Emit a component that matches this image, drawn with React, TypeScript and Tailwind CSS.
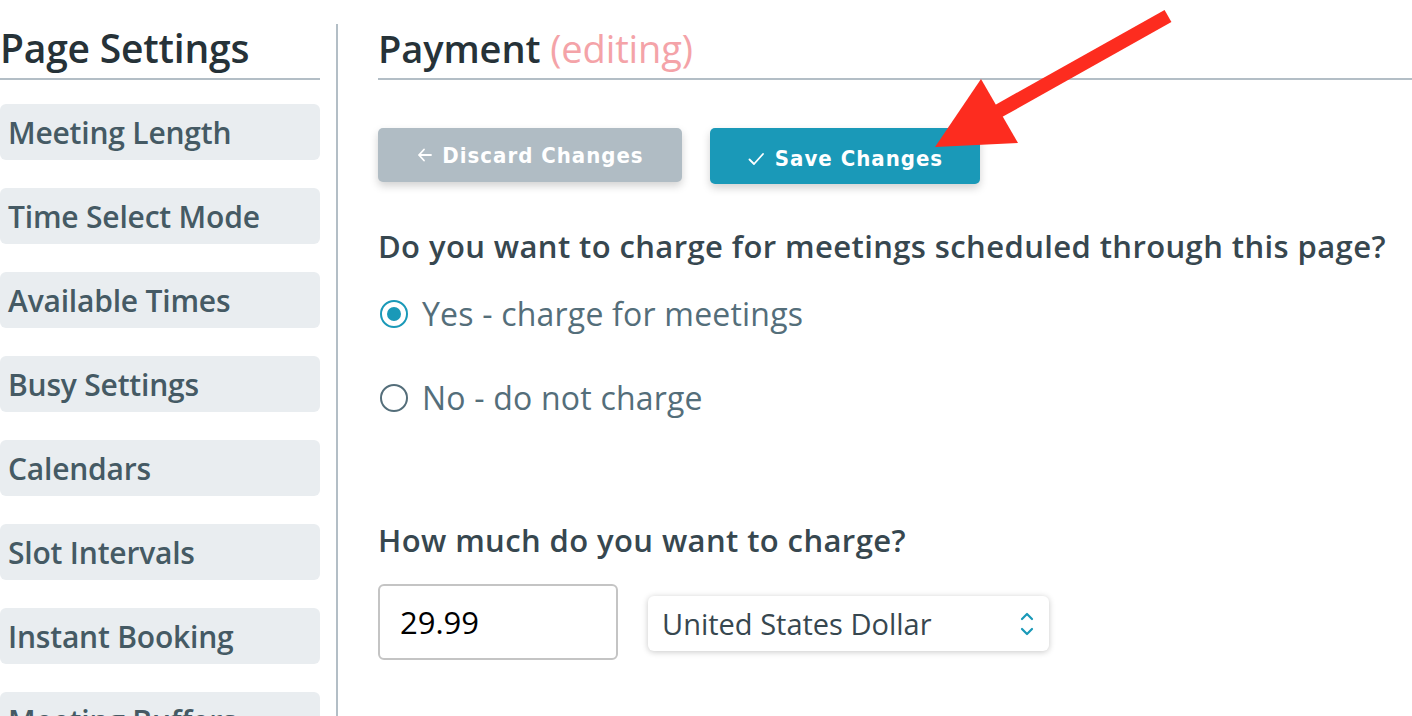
import React from "react";

const items = [
  "Meeting Length",
  "Time Select Mode",
  "Available Times",
  "Busy Settings",
  "Calendars",
  "Slot Intervals",
  "Instant Booking",
  "Meeting Buffers",
];

export default function App() {
  return (
    <div
      className="relative w-[1412px] h-[716px] overflow-hidden bg-white flex"
      style={{ fontFamily: '"Open Sans", "Noto Sans", sans-serif' }}
    >
      {/* Sidebar */}
      <div className="w-[320px] shrink-0 flex flex-col">
        <div className="h-[80px] shrink-0 border-b-2 border-[#b3bec6] flex items-end pb-[6px]">
          <h2 className="text-[39px] leading-[48px] font-semibold text-[#263238] tracking-[-0.2px]">
            Page Settings
          </h2>
        </div>
        <div className="flex flex-col gap-[28px] mt-[24px] shrink-0">
          {items.map((t) => (
            <div
              key={t}
              className="h-[56px] shrink-0 rounded-[6px] bg-[#e9edf0] flex items-center pl-[8px] text-[30px] font-semibold text-[#455a64] tracking-[-0.2px]"
            >
              {t}
            </div>
          ))}
        </div>
      </div>

      {/* Divider */}
      <div className="ml-[16px] mt-[24px] w-[2px] bg-[#b3bec6] shrink-0" />

      {/* Main */}
      <div className="ml-[40px] flex-1 flex flex-col">
        <div className="h-[80px] shrink-0 border-b-2 border-[#b3bec6] flex items-end pb-[6px]">
          <h2 className="text-[38px] leading-[48px] font-semibold text-[#263238] tracking-[-0.1px]">
            Payment{" "}
            <span className="font-normal text-[#f4a3a8]">(editing)</span>
          </h2>
        </div>

        <div className="flex items-start gap-[28px] mt-[48px] shrink-0">
          <button
            className="w-[304px] h-[54px] rounded-[5px] bg-[#b0bcc4] text-white text-[22px] font-bold tracking-[1px] flex items-center justify-center gap-[8px] shadow-[0_4px_8px_rgba(0,0,0,0.18)]"
            style={{ fontFamily: '"Liberation Sans Narrow", "DejaVu Sans Condensed", Roboto, sans-serif' }}
          >
            <svg width="18" height="18" viewBox="0 0 18 18" fill="none" stroke="white" strokeWidth="1.8" strokeLinecap="round" strokeLinejoin="round">
              <path d="M15 9H3M8 3.5L3 9l5 5.5" />
            </svg>
            Discard Changes
          </button>
          <button
            className="w-[270px] h-[56px] rounded-[5px] bg-[#1a99b8] text-white text-[22px] font-bold tracking-[1px] flex items-center justify-center gap-[10px] pt-[5px] shadow-[0_4px_8px_rgba(0,0,0,0.18)]"
            style={{ fontFamily: '"Liberation Sans Narrow", "DejaVu Sans Condensed", Roboto, sans-serif' }}
          >
            <svg width="18" height="18" viewBox="0 0 18 18" fill="none" stroke="white" strokeWidth="1.8" strokeLinecap="round" strokeLinejoin="round">
              <path d="M2.5 9.5l4.5 4.5L16 4" />
            </svg>
            Save Changes
          </button>
        </div>

        <div className="mt-[44px] text-[31px] leading-[36px] font-semibold text-[#37474f] tracking-[0.4px] whitespace-nowrap">
          Do you want to charge for meetings scheduled through this page?
        </div>

        <div className="mt-[30px] flex items-center h-[40px] gap-[14px]">
          <span className="w-[28px] h-[28px] ml-[2px] rounded-full border-[2.5px] border-[#1a99b8] flex items-center justify-center">
            <span className="w-[14px] h-[14px] rounded-full bg-[#1a99b8]" />
          </span>
          <span className="text-[32px] text-[#546e7a] tracking-[0.2px]">Yes - charge for meetings</span>
        </div>

        <div className="mt-[44px] flex items-center h-[40px] gap-[14px]">
          <span className="w-[28px] h-[28px] ml-[2px] rounded-full border-[2.5px] border-[#546e7a]" />
          <span className="text-[32px] text-[#546e7a] tracking-[0.2px]">No - do not charge</span>
        </div>

        <div className="mt-[104px] text-[31px] leading-[36px] font-semibold text-[#37474f] tracking-[0.4px]">
          How much do you want to charge?
        </div>

        <div className="mt-[26px] flex items-start gap-[30px]">
          <div className="w-[240px] h-[76px] rounded-[6px] border-2 border-[#c4c4c4] flex items-center pl-[20px] text-[31px] text-black">
            29.99
          </div>
          <div className="mt-[12px] w-[401px] h-[55px] rounded-[6px] bg-white shadow-[0_1px_6px_rgba(0,0,0,0.22)] flex items-center justify-between pl-[14px] pr-[14px] text-[29px] text-[#37474f]">
            <span>United States Dollar</span>
            <svg width="16" height="28" viewBox="0 0 16 28" fill="none" stroke="#1a99b8" strokeWidth="2.2" strokeLinecap="round" strokeLinejoin="round">
              <path d="M3 9l5-5 5 5M3 19l5 5 5-5" />
            </svg>
          </div>
        </div>
      </div>

      {/* Red arrow annotation */}
      <svg className="absolute left-0 top-0 pointer-events-none" width="1412" height="716">
        <line x1="1168" y1="16" x2="995" y2="113" stroke="#fd2c1f" strokeWidth="14" />
        <polygon points="935,147 981,79 1018,143" fill="#fd2c1f" />
      </svg>
    </div>
  );
}
